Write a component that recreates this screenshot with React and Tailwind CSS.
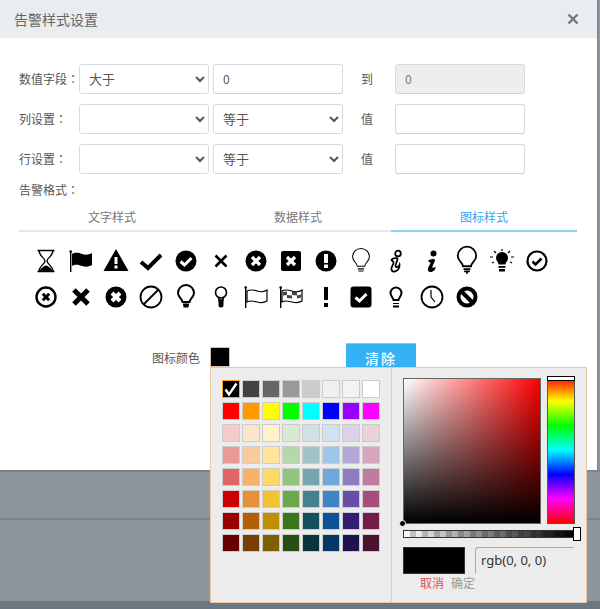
import React from 'react';

const font = "font-['Noto_Sans_CJK_SC','Liberation_Sans',sans-serif]";

const swatches = [
  ['#000000', '#434343', '#666666', '#999999', '#cccccc', '#efefef', '#f3f3f3', '#ffffff'],
  ['#ff0000', '#ff9900', '#ffff00', '#00ff00', '#00ffff', '#0000ff', '#9900ff', '#ff00ff'],
  ['#f4cccc', '#fce5cd', '#fff2cc', '#d9ead3', '#d0e0e3', '#cfe2f3', '#d9d2e9', '#ead1dc'],
  ['#ea9999', '#f9cb9c', '#ffe599', '#b6d7a8', '#a2c4c9', '#9fc5e8', '#b4a7d6', '#d5a6bd'],
  ['#e06666', '#f6b26b', '#ffd966', '#93c47d', '#76a5af', '#6fa8dc', '#8e7cc3', '#c27ba0'],
  ['#cc0000', '#e69138', '#f1c232', '#6aa84f', '#45818e', '#3d85c6', '#674ea7', '#a64d79'],
  ['#990000', '#b45f06', '#bf9000', '#38761d', '#134f5c', '#0b5394', '#351c75', '#741b47'],
  ['#660000', '#783f04', '#7f6000', '#274e13', '#0c343d', '#073763', '#20124d', '#4c1130'],
];

const Bulb = ({ w = 1.4, s = 1, y = 0 }) => (
  <g fill="none" stroke="#000" strokeWidth={w} transform={`translate(12 ${12 + y}) scale(${s}) translate(-12 -12)`}>
    <path d="M8.5 17c0-3-4.5-4.5-4.500-9a8 8 0 0 1 16 0c0 4.500-4.500 6-4.500 9z" />
    <path d="M9 19.500h6M9.500 21.500h5" />
  </g>
);

const icons = [
  <g><path d="M3.500 1.500h17M3.500 22.500h17M5 1.500c0 5.500 6 7.500 6 10.500s-6 5-6 10.500M19 1.500c0 5.500-6 7.500-6 10.500s6 5 6 10.500" fill="none" stroke="#000" strokeWidth="1.400" /><path d="M5 22.500c1.500-3.500 6-6 7-6s5.500 2.500 7 6z" /></g>,
  <g><rect x="1" y="2" width="1.400" height="21" /><circle cx="1.700" cy="2.500" r="1.300" /><path d="M3 5c4-2 7-1 10 0s7 1 10-1v12c-3 2-6 2-10 1s-7-2-10 0z" /></g>,
  <g><path d="M12 0L24.500 22H-.5z" /><rect x="10.500" y="8" width="3" height="7" fill="#fff" /><rect x="10.500" y="16.500" width="3" height="3" fill="#fff" /></g>,
  <path d="M2 13l7 6L22 6" fill="none" stroke="#000" strokeWidth="4" />,
  <g><circle cx="12" cy="12" r="10.500" /><path d="M6.500 12.500l4 3.500 7-7" fill="none" stroke="#fff" strokeWidth="3" /></g>,
  <path d="M6.500 6.500l11 11M17.500 6.500l-11 11" fill="none" stroke="#000" strokeWidth="2.600" />,
  <g><circle cx="12" cy="12" r="10.500" /><path d="M8 8l8 8M16 8l-8 8" fill="none" stroke="#fff" strokeWidth="3.200" /></g>,
  <g><rect x="2" y="2" width="20" height="20" rx="2" /><path d="M8 8l8 8M16 8l-8 8" fill="none" stroke="#fff" strokeWidth="3.200" /></g>,
  <g><circle cx="12" cy="12" r="10.500" /><rect x="10" y="5" width="4" height="9" fill="#fff" /><rect x="10" y="15.500" width="4" height="3.500" fill="#fff" /></g>,
  <Bulb w={1} s={1.05} />,
  <g fill="none" stroke="#000" strokeWidth="1.800"><circle cx="14" cy="4.500" r="2.800" /><path d="M7.500 11c1-2 6-2.500 6-1 0 2-2 5-2 7 0 2 3 1.500 4-1 .5 3-2 6-5 6.500-2.500.3-3.500-1.500-3-3.500.4-2 2.500-4.500 2-6-.5-.8-1.500-.8-2-2z" /></g>,
  <g><circle cx="13.500" cy="4.500" r="3" /><path d="M8 12c1-2 7-3 7-1 0 2-3 6-2.500 7.500.3 1 2 .3 3-1 .5 3-2 5.500-5 5.500-2.500 0-3-2-2.500-3.500.5-2 2.800-5 2.300-6-.5-.6-1.500-.4-2.300-1.500z" /></g>,
  <g><Bulb w={1.600} s={1.150} y={-.5} /><path d="M12 23v2" stroke="#000" strokeWidth="1.500" /></g>,
  <g><path d="M8.500 15.500c0-2.500-2.500-3.500-2.500-6.500a6 6 0 0 1 12 0c0 3-2.500 4-2.500 6.500z" /><rect x="8.500" y="17" width="7" height="1.800" /><rect x="9" y="20" width="6" height="2.500" /><path d="M12 0v2M4 2l2 2M20 2l-2 2M0 8h3M21 8h3M2 14l2-1M22 14l-2-1" stroke="#000" strokeWidth="1.200" /></g>,
  <g><circle cx="12" cy="12" r="9.500" fill="none" stroke="#000" strokeWidth="2.200" /><path d="M7.500 12.500l3 3 6-6" fill="none" stroke="#000" strokeWidth="2.500" /></g>,
  <g><circle cx="12" cy="12" r="9.500" fill="none" stroke="#000" strokeWidth="2.400" /><path d="M8.800 8.800l6.400 6.400M15.200 8.800l-6.400 6.400" fill="none" stroke="#000" strokeWidth="3" /></g>,
  <path d="M5 5l14 14M19 5L5 19" fill="none" stroke="#000" strokeWidth="5" />,
  <g><circle cx="12" cy="12" r="10.500" /><path d="M8 8l8 8M16 8l-8 8" fill="none" stroke="#fff" strokeWidth="4" /></g>,
  <g fill="none" stroke="#000" strokeWidth="1.800"><circle cx="12" cy="12" r="10.500" /><path d="M5 19L19 5" /></g>,
  <Bulb w={2} />,
  <g><g fill="none" stroke="#000" strokeWidth="1.600"><circle cx="12" cy="7.500" r="5.500" /><path d="M9.500 12l.5 3h4l.5-3" /></g><path d="M9.500 15h5v5a2.500 2.500 0 0 1-5 0z" /></g>,
  <g><rect x="1" y="2" width="1.400" height="21" /><circle cx="1.700" cy="2.500" r="1.300" /><path d="M3 6c4-2 7-1 10 0s7 1 10-1v11c-3 2-6 2-10 1s-7-2-10 0z" fill="none" stroke="#000" strokeWidth="1.200" /></g>,
  <g><rect x="1" y="2" width="1.400" height="21" /><circle cx="1.700" cy="2.500" r="1.300" /><path d="M3 6c4-2 7-1 10 0s7 1 10-1v11c-3 2-6 2-10 1s-7-2-10 0z" fill="none" stroke="#000" strokeWidth="1.200" /><path d="M4 7l4-.5v3.500l-4 .5zM8 10l5 .5v3l-5-.5zM13 6.500l5 .5v3.500l-5-.5zM18 10.500l4-1v3l-4 1z" fill="#444" /></g>,
  <g><rect x="10" y="2" width="4" height="13" /><rect x="10" y="18" width="4" height="4" /></g>,
  <g><rect x="1.500" y="1.500" width="21" height="21" rx="3" /><path d="M6.500 12.500l4 3.500 7-7" fill="none" stroke="#fff" strokeWidth="3" /></g>,
  <g><path d="M9.500 15c0-2-3-3.500-3-7a5.500 5.500 0 0 1 11 0c0 3.500-3 5-3 7z" fill="none" stroke="#000" strokeWidth="2" /><rect x="9" y="18" width="6" height="1" /><rect x="9" y="20.500" width="6" height="2" /></g>,
  <g fill="none" stroke="#000" strokeWidth="1.800"><circle cx="12" cy="12" r="10.500" /><path d="M11 5v7l4 5" strokeWidth="1.200" /></g>,
  <g fill="none" stroke="#000"><circle cx="12" cy="12" r="8.500" strokeWidth="4" /><path d="M6 6l12 12" strokeWidth="4" /></g>,
];

function Field({ children, className = '' }) {
  return <div className={`h-[30px] w-[130px] rounded-[3px] border border-[#d5dbe0] border-b-[#c9d0d6] ${className}`}>{children}</div>;
}

function Sel({ value, options }) {
  return (
    <select defaultValue={value} className={`h-[30px] w-[130px] rounded-[3px] border border-[#d5dbe0] bg-white pb-[2px] pl-[5px] text-[13px] text-[#555] outline-none ${font}`}>
      {options.map((o) => <option key={o} value={o}>{o}</option>)}
    </select>
  );
}

// the colon in the original sits in the middle of its cell, as in the TC glyph
function Label({ text }) {
  return <>{text}<span className="font-['Noto_Sans_CJK_TC',sans-serif]">：</span></>;
}

function Row({ label, left, right, sep, input }) {
  return (
    <div className="flex items-center">
      <span className="w-[60px] shrink-0 whitespace-nowrap text-[12px] text-[#555]"><Label text={label} /></span>
      {left}
      <div className="ml-1">{right}</div>
      <span className="ml-[18px] w-[34px] text-[12px] text-[#555]">{sep}</span>
      {input}
    </div>
  );
}

export default function App() {
  const ops = ['等于', '大于', '小于'];
  return (
    <div className={`relative h-[609px] w-[600px] overflow-hidden bg-[#8d949b] ${font}`}>
      <div className="h-[470px] w-[598px] border-r border-[#7c8389] bg-white">
        <div className="flex h-[38px] items-center justify-between bg-[#e9ecf0] pl-[14px] pr-[18px]">
          <span className="text-[14px] text-[#666]">告警样式设置</span>
          <svg viewBox="0 0 12 12" className="h-[12px] w-[12px]"><path d="M1.500 1.500l9 9M10.500 1.500l-9 9" stroke="#777" strokeWidth="2.400" fill="none" /></svg>
        </div>
        <div className="flex flex-col gap-[10px] pl-[19px] pt-[26px]">
          <Row label="数值字段" left={<Sel value="大于" options={ops} />} sep="到"
            right={<Field className="bg-white pl-[9px] text-[12px] leading-[28px] text-[#555]">0</Field>}
            input={<Field className="bg-[#eeeeee] pl-[9px] text-[12px] leading-[28px] text-[#777]">0</Field>} />
          <Row label="列设置" left={<Sel value="" options={['']} />} right={<Sel value="等于" options={ops} />} sep="值" input={<Field className="bg-white" />} />
          <Row label="行设置" left={<Sel value="" options={['']} />} right={<Sel value="等于" options={ops} />} sep="值" input={<Field className="bg-white" />} />
        </div>
        <div className="pl-[19px] pt-[7px] text-[12px] leading-[18px] text-[#555]"><Label text="告警格式" /></div>
        <div className="ml-[19px] mt-[9px] flex w-[558px] text-[12px]">
          <div className="flex h-[24px] flex-1 items-center justify-center border-b-2 border-[#e4e7ed] pb-1 text-[#777]">文字样式</div>
          <div className="flex h-[24px] flex-1 items-center justify-center border-b-2 border-[#e4e7ed] pb-1 text-[#777]">数据样式</div>
          <div className="flex h-[24px] flex-1 items-center justify-center border-b-2 border-[#8fd0f7] pb-1 text-[#35a4ec]">图标样式</div>
        </div>
        <div className="ml-[28px] mt-[16px] flex w-[530px] flex-wrap gap-y-[11px]">
          {icons.map((ic, i) => (
            <div key={i} className="flex h-[25px] w-[35.1px] items-center justify-center">
              <svg viewBox="0 0 24 24" className="h-[24px] w-[24px] overflow-visible">{ic}</svg>
            </div>
          ))}
        </div>
        <div className="mt-[39px] flex items-start">
          <span className="ml-[152px] mt-[1px] text-[12px] text-[#555]">图标颜色</span>
          <div className="ml-[10px] mt-[-1px] h-[20px] w-[20px] border border-[#d9bfa6] bg-black" />
          <div className="ml-[116px] mt-[-5px] flex h-[30px] w-[70px] justify-center border-t border-[#7cc8f5] bg-[#35b1f5] pt-[4px] text-[14px] font-medium tracking-[2px] text-white">清除</div>
        </div>
      </div>
      <div className="absolute left-0 top-[470px] h-[2px] w-[600px] bg-[#7c8389]" />
      <div className="absolute left-0 top-[518px] h-[2px] w-[600px] bg-[#7c8389]" />
      <div className="absolute bottom-0 left-0 h-[8px] w-[600px] bg-[#6b7883]" />

      <div className="absolute left-[210px] top-[367px] flex h-[236px] w-[377px] border border-[#ecc9a6] bg-[#ececec]">
        <div className="flex w-[181px] flex-col gap-[4px] border-r border-[#cfcfcf] pl-[11px] pt-[12px]">
          {swatches.map((row, r) => (
            <div key={r} className="flex gap-[2px]">
              {row.map((c, i) => (
                <div key={c} className={`relative flex h-[18px] w-[18px] items-center justify-center border ${r === 0 && i === 0 ? 'border-[#f5a623]' : 'border-[#cccccc]'}`} style={{ backgroundColor: c }}>
                  {r === 0 && i === 0 && (
                    <svg viewBox="0 0 16 16" className="h-[16px] w-[16px]"><path d="M2.500 8.500l3.500 5L13.500 2.500" fill="none" stroke="#fff" strokeWidth="2.400" /></svg>
                  )}
                </div>
              ))}
            </div>
          ))}
        </div>
        <div className="relative flex-1 pl-[11px] pt-[10px]">
          <div className="flex items-start gap-[6px]">
            <div className="relative h-[146px] w-[138px] border border-[#666] bg-[linear-gradient(to_top,#000,transparent),linear-gradient(to_right,#fff,#f00)]">
              <div className="absolute bottom-[-4px] left-[-5px] h-[7px] w-[7px] rounded-full border border-white bg-black" />
            </div>
            <div className="relative mt-[-2px] h-[148px] w-[28px] border border-[#555] bg-[linear-gradient(to_bottom,#f00,#ff0,#0f0,#0ff,#00f,#f0f,#f00)]">
              <div className="absolute left-[-1px] top-[-1px] h-[5px] w-[28px] border border-black bg-white" />
            </div>
          </div>
          <div className="relative mt-[6px] h-[8px] w-[171px] border border-[#333] bg-[linear-gradient(to_right,transparent,#000),repeating-conic-gradient(#ccc_0_25%,#fff_0_50%)] [background-size:100%_100%,12px_12px]">
            <div className="absolute right-[-8px] top-[-4px] h-[14px] w-[8px] border border-black bg-white" />
          </div>
          <div className="mt-[9px] flex gap-[10px]">
            <div className="h-[27px] w-[62px] border border-[#333] bg-black" />
            <div className="flex h-[27px] w-[99px] items-center rounded-tl-[3px] border-l border-t border-[#aaa] pl-[5px] font-['Noto_Sans',sans-serif] text-[13px] text-[#333]">rgb(0, 0, 0)</div>
          </div>
          <div className="ml-[17px] flex gap-[7px] text-[12px] leading-[18px]">
            <span className="text-[#d9534f]">取消</span>
            <span className="text-[#999]">确定</span>
          </div>
        </div>
      </div>
    </div>
  );
}
